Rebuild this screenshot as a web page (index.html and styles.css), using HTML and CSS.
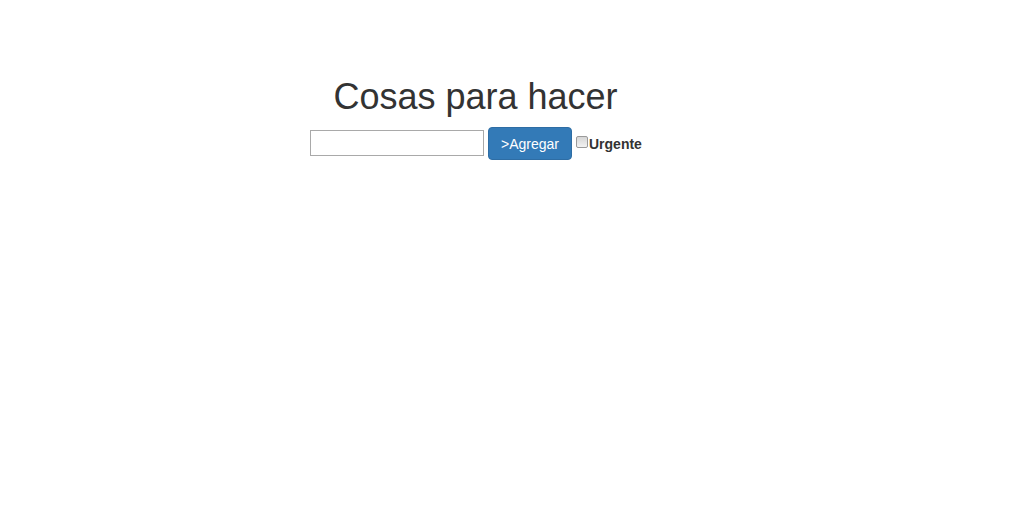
FILE: index.html
```html
<!DOCTYPE html>
<html lang="es">
<head>
<meta charset="utf-8">
<title>Cosas para hacer</title>
<link rel="stylesheet" href="styles.css">
</head>
<body>
<div class="app">
  <h1 class="title">Cosas para hacer</h1>
  <form class="row">
    <input class="task-input" type="text">
    <button class="btn-add" type="button">&gt;Agregar</button>
    <label class="urgent"><input class="urgent-box" type="checkbox">Urgente</label>
  </form>
</div>
</body>
</html>
```
FILE: styles.css
```css
html, body {
  margin: 0;
  padding: 0;
  background: #fff;
}
body {
  font-family: "Liberation Sans", Arial, sans-serif;
  font-size: 14px;
  line-height: 1.42857;
  color: #333;
}
.app {
  width: 331px;
  margin-left: 310px;
  padding-top: 77px;
}
.title {
  margin: 0 0 10px;
  font-size: 36px;
  font-weight: 500;
  line-height: 1.1;
  text-align: center;
  color: #333;
}
.row {
  display: flex;
  align-items: center;
  margin: 0;
}
.task-input {
  box-sizing: border-box;
  width: 174px;
  height: 26px;
  margin: 0 4px 0 0;
  border: 1px solid #a9a9a9;
  padding: 1px 2px;
  font: inherit;
}
.btn-add {
  box-sizing: border-box;
  height: 33px;
  width: 84px;
  padding: 6px 12px;
  margin: 0;
  background: #337ab7;
  border: 1px solid #2e6da4;
  border-radius: 4px;
  color: #fff;
  font-family: inherit;
  font-size: 14px;
  line-height: 20px;
  cursor: pointer;
}
.urgent {
  display: flex;
  align-items: center;
  font-weight: 700;
  font-size: 14px;
  line-height: 20px;
  padding-top: 1px;
}
.urgent-box {
  -webkit-appearance: none;
  appearance: none;
  box-sizing: border-box;
  width: 12px;
  height: 12px;
  margin: 0 1px 4px 4px;
  border: 1px solid #9a9a9a;
  border-radius: 2px;
  background: linear-gradient(#d6d6d6, #f2f2f2);
}
```
